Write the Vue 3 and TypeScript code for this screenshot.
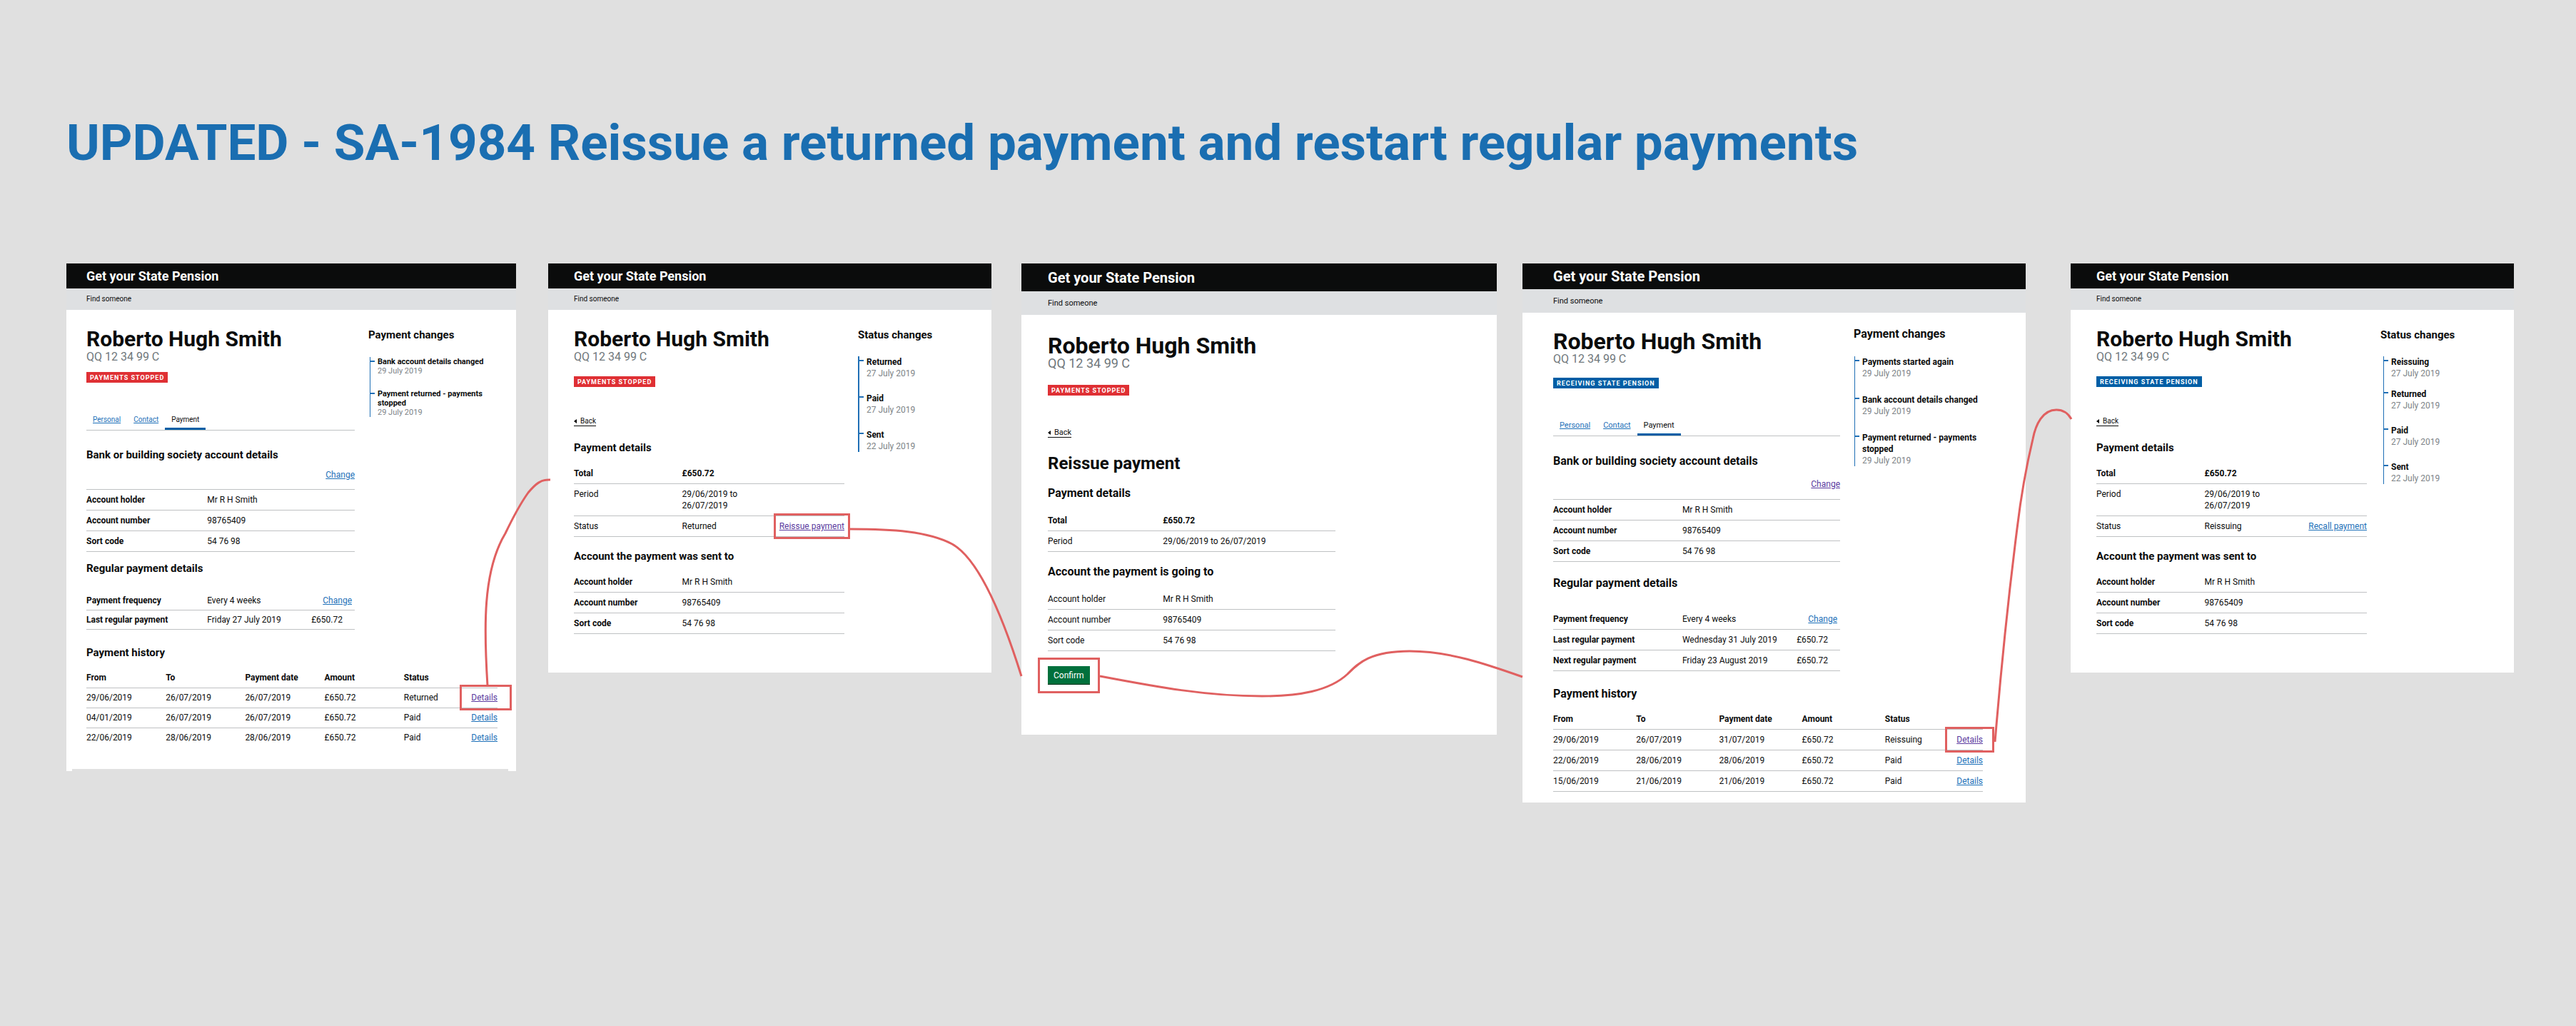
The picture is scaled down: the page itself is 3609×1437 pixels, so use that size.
<script setup lang="ts">
interface Action { label: string; visited?: boolean; marked?: boolean }
interface Row { term: string; value: string; amount?: string; action?: Action; plain?: boolean; strong?: boolean }
interface Section { title: string; change?: Action; rows: Row[]; ruled?: boolean; kind?: string }
interface Event { title: string; date: string }
interface Payment { from: string; to: string; paid: string; amount: string; status: string; visited?: boolean; marked?: boolean }
interface Frame {
  id: string
  tag: { label: string; tone: 'stopped' | 'receiving' }
  tabs?: boolean
  pageTitle?: string
  sections: Section[]
  history?: Payment[]
  confirm?: boolean
  changes?: { title: string; events: Event[] }
}

const stopped = { label: 'Payments stopped', tone: 'stopped' } as const
const receiving = { label: 'Receiving State Pension', tone: 'receiving' } as const

const account = (plain = false): Row[] => [
  { term: 'Account holder', value: 'Mr R H Smith', plain },
  { term: 'Account number', value: '98765409', plain },
  { term: 'Sort code', value: '54 76 98', plain },
]

const paymentDetails = (status: string, action: Action): Section => ({
  title: 'Payment details',
  rows: [
    { term: 'Total', value: '£650.72', strong: true },
    { term: 'Period', value: '29/06/2019 to\n26/07/2019', plain: true },
    { term: 'Status', value: status, plain: true, action },
  ],
})

const frames: Frame[] = [
  {
    id: 'overview',
    tag: stopped,
    tabs: true,
    sections: [
      { title: 'Bank or building society account details', change: { label: 'Change' }, ruled: true, kind: 'bank', rows: account() },
      {
        title: 'Regular payment details',
        kind: 'regular',
        rows: [
          { term: 'Payment frequency', value: 'Every 4 weeks', action: { label: 'Change' } },
          { term: 'Last regular payment', value: 'Friday 27 July 2019', amount: '£650.72' },
        ],
      },
    ],
    history: [
      { from: '29/06/2019', to: '26/07/2019', paid: '26/07/2019', amount: '£650.72', status: 'Returned', visited: true, marked: true },
      { from: '04/01/2019', to: '26/07/2019', paid: '26/07/2019', amount: '£650.72', status: 'Paid' },
      { from: '22/06/2019', to: '28/06/2019', paid: '28/06/2019', amount: '£650.72', status: 'Paid' },
    ],
    changes: {
      title: 'Payment changes',
      events: [
        { title: 'Bank account details changed', date: '29 July 2019' },
        { title: 'Payment returned - payments stopped', date: '29 July 2019' },
      ],
    },
  },
  {
    id: 'returned',
    tag: stopped,
    sections: [
      paymentDetails('Returned', { label: 'Reissue payment', visited: true, marked: true }),
      { title: 'Account the payment was sent to', rows: account() },
    ],
    changes: {
      title: 'Status changes',
      events: [
        { title: 'Returned', date: '27 July 2019' },
        { title: 'Paid', date: '27 July 2019' },
        { title: 'Sent', date: '22 July 2019' },
      ],
    },
  },
  {
    id: 'reissue',
    tag: stopped,
    pageTitle: 'Reissue payment',
    sections: [
      {
        title: 'Payment details',
        rows: [
          { term: 'Total', value: '£650.72', strong: true },
          { term: 'Period', value: '29/06/2019 to 26/07/2019', plain: true },
        ],
      },
      { title: 'Account the payment is going to', rows: account(true) },
    ],
    confirm: true,
  },
  {
    id: 'restarted',
    tag: receiving,
    tabs: true,
    sections: [
      { title: 'Bank or building society account details', change: { label: 'Change', visited: true }, ruled: true, kind: 'bank', rows: account() },
      {
        title: 'Regular payment details',
        kind: 'regular',
        rows: [
          { term: 'Payment frequency', value: 'Every 4 weeks', action: { label: 'Change' } },
          { term: 'Last regular payment', value: 'Wednesday 31 July 2019', amount: '£650.72' },
          { term: 'Next regular payment', value: 'Friday 23 August 2019', amount: '£650.72' },
        ],
      },
    ],
    history: [
      { from: '29/06/2019', to: '26/07/2019', paid: '31/07/2019', amount: '£650.72', status: 'Reissuing', visited: true, marked: true },
      { from: '22/06/2019', to: '28/06/2019', paid: '28/06/2019', amount: '£650.72', status: 'Paid' },
      { from: '15/06/2019', to: '21/06/2019', paid: '21/06/2019', amount: '£650.72', status: 'Paid' },
    ],
    changes: {
      title: 'Payment changes',
      events: [
        { title: 'Payments started again', date: '29 July 2019' },
        { title: 'Bank account details changed', date: '29 July 2019' },
        { title: 'Payment returned - payments stopped', date: '29 July 2019' },
      ],
    },
  },
  {
    id: 'reissuing',
    tag: receiving,
    sections: [
      paymentDetails('Reissuing', { label: 'Recall payment' }),
      { title: 'Account the payment was sent to', rows: account() },
    ],
    changes: {
      title: 'Status changes',
      events: [
        { title: 'Reissuing', date: '27 July 2019' },
        { title: 'Returned', date: '27 July 2019' },
        { title: 'Paid', date: '27 July 2019' },
        { title: 'Sent', date: '22 July 2019' },
      ],
    },
  },
]

// Arrows between screens, in the coordinates of the board below its title.
const connectors: string[] = [
  'M683 591 C678 511 676 431 708 378 C720 353 730 335 740 321 C750 309 758 302 771 303',
  'M1191 372 C1250 372 1300 375 1334 393 C1375 416 1410 511 1431 578',
  'M1541 578 C1620 593 1690 606 1768 606 C1820 606 1862 599 1888 575 C1902 561 1918 543 1975 543 C2030 543 2082 561 2133 579',
  'M2795 670 C2804 561 2812 481 2826 371 C2832 321 2842 271 2848 246 C2852 225 2862 205 2881 205 C2891 205 2897 209 2902 218',
]
</script>

<template>
  <main class="board">
    <h1 class="board-title">UPDATED - SA-1984 Reissue a returned payment and restart regular payments</h1>

    <div class="flow">
      <article v-for="frame in frames" :key="frame.id" class="frame" :class="`frame--${frame.id}`">
        <header class="masthead">Get your State Pension</header>
        <nav class="subnav"><a href="#">Find someone</a></nav>

        <div class="body">
          <div class="columns">
            <div class="primary">
              <h2 class="name">Roberto Hugh Smith</h2>
              <p class="nino">QQ 12 34 99 C</p>
              <strong class="tag" :class="`tag--${frame.tag.tone}`">{{ frame.tag.label }}</strong>

              <nav v-if="frame.tabs" class="tabs">
                <a href="#">Personal</a>
                <a href="#">Contact</a>
                <a href="#" class="current" aria-current="page">Payment</a>
              </nav>
              <div v-else class="back-row">
                <a href="#" class="back">
                  <svg viewBox="0 0 4 6" aria-hidden="true"><path d="M4 0 L0 3 L4 6 Z" /></svg>
                  Back
                </a>
              </div>

              <h3 v-if="frame.pageTitle" class="page-title">{{ frame.pageTitle }}</h3>

              <section v-for="section in frame.sections" :key="section.title" class="section" :class="section.kind">
                <h4>{{ section.title }}</h4>
                <div v-if="section.change" class="change">
                  <a href="#" class="link" :class="{ visited: section.change.visited }">{{ section.change.label }}</a>
                </div>
                <dl :class="{ ruled: section.ruled }">
                  <div v-for="row in section.rows" :key="row.term" class="row">
                    <dt :class="{ plain: row.plain }">{{ row.term }}</dt>
                    <dd :class="{ strong: row.strong }">{{ row.value }}</dd>
                    <dd v-if="row.amount" class="amount">{{ row.amount }}</dd>
                    <dd v-if="row.action" class="action">
                      <a href="#" class="link" :class="{ visited: row.action.visited, marked: row.action.marked }">{{ row.action.label }}</a>
                    </dd>
                  </div>
                </dl>
              </section>
            </div>

            <aside v-if="frame.changes" class="changes">
              <h4>{{ frame.changes.title }}</h4>
              <ol>
                <li v-for="event in frame.changes.events" :key="event.title">
                  <b>{{ event.title }}</b>
                  <time>{{ event.date }}</time>
                </li>
              </ol>
            </aside>
          </div>

          <section v-if="frame.history" class="history">
            <h4>Payment history</h4>
            <table>
              <thead>
                <tr>
                  <th scope="col" class="wide">From</th>
                  <th scope="col" class="wide">To</th>
                  <th scope="col" class="wide">Payment date</th>
                  <th scope="col" class="wide">Amount</th>
                  <th scope="col">Status</th>
                  <td class="details"></td>
                </tr>
              </thead>
              <tbody>
                <tr v-for="payment in frame.history" :key="payment.from">
                  <td>{{ payment.from }}</td>
                  <td>{{ payment.to }}</td>
                  <td>{{ payment.paid }}</td>
                  <td>{{ payment.amount }}</td>
                  <td>{{ payment.status }}</td>
                  <td class="details">
                    <a href="#" class="link" :class="{ visited: payment.visited, marked: payment.marked }">Details</a>
                  </td>
                </tr>
              </tbody>
            </table>
          </section>

          <div v-if="frame.confirm" class="confirm">
            <span class="marked"><button type="button">Confirm</button></span>
          </div>
        </div>
      </article>

      <svg class="connectors" viewBox="0 0 3609 756" preserveAspectRatio="none" aria-hidden="true">
        <path v-for="path in connectors" :key="path" :d="path" />
      </svg>
    </div>
  </main>
</template>

<style>
html,
body {
  background: #e0e0e0;
}
</style>

<style scoped>
.board {
  min-height: 100vh;
  box-sizing: border-box;
  padding: 150px 0 60px;
  background: #e0e0e0;
  color: #0b0c0c;
  font: 12px/16px Roboto, "Liberation Sans", sans-serif;
}

.board h1,
.board h2,
.board h3,
.board h4,
.board p,
.board dl,
.board dd,
.board ol {
  margin: 0;
  padding: 0;
}

.board .board-title {
  margin: 0 93px 119px;
  color: #1a6eb1;
  font-size: 71px;
  line-height: 100px;
  font-weight: 700;
  white-space: nowrap;
}

.flow {
  position: relative;
  display: grid;
  grid-template-columns: 630fr 45px 621fr 42px 666fr 36px 705fr 63px 621fr;
  align-items: start;
  padding: 0 87px 0 93px;
}

.connectors {
  position: absolute;
  top: 0;
  left: 0;
  width: 100%;
  height: 756px;
  pointer-events: none;
}

.connectors path {
  fill: none;
  stroke: #e06060;
  stroke-width: 3;
}

/* Screens */
.frame {
  --bar: 35px;
  --subbar: 30px;
  --inset: 36px;
  --top: 25px;
  --name: 30px;
  --nino: 16px;
  --small: 10px;
  --heading: 15px;
  --masthead: 18px;
  --tag-gap: 18px;
  --nav-gap: 42px;
  --first-gap: 20px;
  --section-gap: 17px;
  --list-gap: 12px;
  --term: 40%;
  --ratio: minmax(0, 379fr) minmax(0, 161fr);
  --list-inset: 0px;
  --rail: 1px;
  --event-gap: 19px;
  position: relative;
  background: #fff;
}

.frame--overview { grid-column: 1; --inset: 28px; --tag-gap: 12px; --nav-gap: 46px; --first-gap: 24px; --section-gap: 13px; --term: 45%; --ratio: minmax(0, 376fr) minmax(0, 181fr); --list-inset: 2px; }
.frame--returned { grid-column: 3; --rail: 2px; }
.frame--reissue { grid-column: 5; --bar: 39px; --subbar: 33px; --inset: 37px; --top: 27px; --name: 32px; --nino: 18px; --small: 11px; --heading: 16px; --masthead: 20px; --tag-gap: 21px; --nav-gap: 46px; --first-gap: 18px; --section-gap: 18px; --list-gap: 14px; --ratio: minmax(0, 403fr) minmax(0, 181fr); }
.frame--restarted { grid-column: 7; --bar: 36px; --subbar: 33px; --inset: 43px; --top: 20px; --name: 32px; --small: 11px; --heading: 16px; --masthead: 20px; --tag-gap: 17px; --nav-gap: 46px; --first-gap: 25px; --section-gap: 20px; --term: 45%; --ratio: minmax(0, 402fr) minmax(0, 215fr); --list-inset: 1px; --event-gap: 21px; }
.frame--reissuing { grid-column: 9; --list-inset: 4px; }

.masthead {
  display: flex;
  align-items: center;
  height: var(--bar);
  padding-left: var(--inset);
  background: #0b0c0c;
  color: #fff;
  font-size: var(--masthead);
  font-weight: 700;
}

.subnav {
  display: flex;
  align-items: center;
  height: var(--subbar);
  padding-left: var(--inset);
  background: #dee0e2;
  font-size: var(--small);
}

.subnav a {
  color: inherit;
  text-decoration: none;
}

.body {
  padding: var(--top) 26px 54px var(--inset);
}

.frame--overview .body { padding-bottom: 33px; }
.frame--reissue .body { padding-bottom: 70px; }
.frame--restarted .body { padding-bottom: 15px; }

.columns {
  display: grid;
  grid-template-columns: var(--ratio);
  column-gap: 19px;
}

.name {
  font-size: var(--name);
  line-height: 32px;
  white-space: nowrap;
}

.frame--restarted .primary { padding-top: 4px; }

.nino {
  color: #6f777b;
  font-size: var(--nino);
  line-height: 18px;
}

.tag {
  display: block;
  width: fit-content;
  margin-top: var(--tag-gap);
  padding: 1px 5px 0;
  color: #fff;
  font-size: 9px;
  line-height: 14px;
  letter-spacing: 1px;
  text-transform: uppercase;
}

.tag--stopped { background: #df3034; }
.tag--receiving { background: #005ea5; }

.tabs {
  display: flex;
  margin-top: var(--nav-gap);
  border-bottom: 1px solid #bfc1c3;
  font-size: var(--small);
  line-height: 12px;
}

.tabs a {
  padding: 0 9px 8px;
  color: #1d70b8;
}

.tabs .current {
  padding-bottom: 5px;
  border-bottom: 3px solid #005ea5;
  color: inherit;
  text-decoration: none;
}

.back-row {
  display: flex;
  margin-top: var(--nav-gap);
}

.back {
  display: flex;
  align-items: center;
  gap: 5px;
  border-bottom: 1px solid #0b0c0c;
  color: inherit;
  font-size: var(--small);
  line-height: 12px;
  text-decoration: none;
}

.back svg {
  width: 4px;
  height: 6px;
}

.board .page-title {
  margin-top: 22px;
  font-size: 24px;
  line-height: 28px;
}

.board h4 {
  font-size: var(--heading);
  line-height: 20px;
}

.section {
  margin-top: var(--section-gap);
}

.tabs + .section,
.back-row + .section,
.page-title + .section {
  margin-top: var(--first-gap);
}

.change {
  display: flex;
  justify-content: flex-end;
  margin: 10px 0 12px;
}

.frame--restarted .change { margin: 14px 0 13px; }

.board .section dl {
  margin-top: var(--list-gap);
}

.board .section dl.ruled {
  margin-top: 0;
  border-top: 1px solid #bfc1c3;
}

.board .regular dl { margin-top: 22px; }
.board .frame--restarted .regular dl { margin-top: 26px; }

.row {
  display: grid;
  grid-template-columns: var(--term) 1fr auto;
  padding: 6px 0;
  border-bottom: 1px solid #bfc1c3;
  white-space: pre;
}

.frame--overview .regular .row { padding: 5px 0; }

dt,
.strong {
  font-weight: 700;
}

dt.plain {
  font-weight: 400;
}

.board .amount { padding-right: 17px; }
.board .regular .action { padding-right: 4px; }

.link {
  position: relative;
  color: #1d70b8;
}

.link.visited {
  color: #5a3a9e;
}

.marked {
  position: relative;
}

.marked::after {
  content: "";
  position: absolute;
  inset: -11px -8px;
  border: 3px solid #e06060;
  pointer-events: none;
}

/* Timeline of changes */
.board ol {
  margin: 20px 0 0 var(--list-inset);
  border-left: var(--rail) solid #1f6fb5;
  list-style: none;
}

.board .frame--overview ol,
.board .frame--restarted ol {
  margin-top: 21px;
}

.board li {
  position: relative;
  padding-left: 10px;
}

.frame--overview li {
  font-size: 11px;
  line-height: 13px;
}

li + li {
  margin-top: var(--event-gap);
}

.frame--reissuing li:nth-child(2) { margin-top: 13px; }

li::before {
  content: "";
  position: absolute;
  top: 5px;
  left: 0;
  width: 6px;
  height: 2px;
  background: #1f6fb5;
}

li b,
time {
  display: block;
}

time {
  color: #7d8387;
}

/* Payment history */
.history {
  margin-top: 22px;
}

.frame--restarted .history { margin-right: 34px; }

table {
  width: 100%;
  margin-top: 11px;
  border-collapse: collapse;
  table-layout: fixed;
}

th,
td {
  padding: 6px 0;
  border-bottom: 1px solid #bfc1c3;
  text-align: left;
}

.wide {
  width: calc(100% * 111 / 575);
}

.details {
  width: 40px;
}

.frame--overview tbody td { padding-top: 5px; }
.frame--overview tbody tr:last-child td { border-bottom: 0; }

.board .details { text-align: right; }

.details .marked::after { inset: -11px -16px; }
.frame--overview .details .marked::after { right: -20px; }

/* The first screen ends in a shallow recess between two feet. */
.frame--overview::after {
  content: "";
  position: absolute;
  right: 11px;
  bottom: 0;
  left: 8px;
  height: 3px;
  background: #e0e0e0;
}

.confirm {
  display: flex;
  margin-top: 21px;
}

.confirm .marked::after { inset: -12px -14px; }

button {
  display: block;
  height: 26px;
  padding: 0 8px;
  border: 0;
  border-bottom: 1px solid #002d18;
  background: #00703c;
  color: #fff;
  font: inherit;
}
</style>
